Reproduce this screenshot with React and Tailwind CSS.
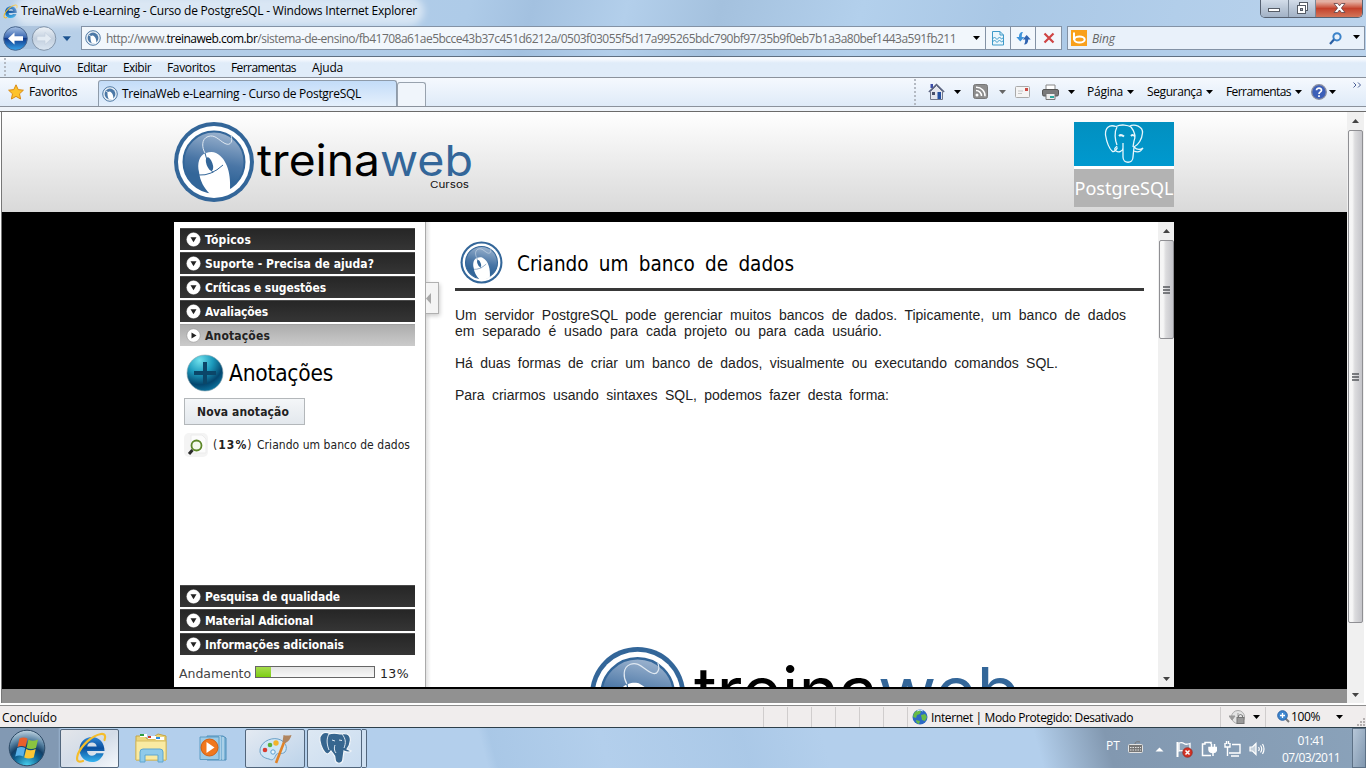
import { useLayoutEffect, useRef } from "react";

/* One line of text spread over a fixed width, by letter or by word spacing. */
function Fit({ w, by = "letter", className = "", children }) {
  const ref = useRef(null);
  useLayoutEffect(() => {
    const el = ref.current;
    el.style.letterSpacing = "0px";
    el.style.wordSpacing = "0px";
    const text = el.textContent;
    const rest = w - el.getBoundingClientRect().width;
    if (by === "word") el.style.wordSpacing = rest / (text.split(" ").length - 1) + "px";
    else el.style.letterSpacing = rest / text.length + "px";
  }, [w, by]);
  return (
    <span ref={ref} className={"inline-block shrink-0 whitespace-pre " + className}>
      {children}
    </span>
  );
}

const Down = ({ className = "" }) => (
  <svg className={"shrink-0 " + className} width="7" height="4" viewBox="0 0 7 4">
    <path d="M0 0h7L3.5 4z" fill="currentColor" />
  </svg>
);

const MouseArt = ({ id }) => (
  <g>
    <defs>
      <linearGradient id={id} x1="0.6" y1="0" x2="0.4" y2="1">
        <stop offset="0" stopColor="#9db4cf" />
        <stop offset="0.5" stopColor="#4a76a6" />
        <stop offset="0.75" stopColor="#336699" />
      </linearGradient>
    </defs>
    <circle cx="40" cy="40" r="40" fill="#336699" />
    <circle cx="40" cy="40" r="36" fill="#fff" />
    <circle cx="40" cy="40" r="30.500" fill={"url(#" + id + ")"} stroke="#336699" strokeWidth="2" />
    <path d="M32 31C25 33 23 42 25 50c1 9 5 16 11 22 7 1 14 0 20-4 1-14-2-31-14-37-3-1.500-7-1-10 0z" fill="#fff" />
    <path d="M25 53q12 1 24-10M31 31q2 12 8 20" fill="none" stroke="#336699" strokeWidth="1" />
    <ellipse cx="35.500" cy="42" rx="3" ry="7" transform="rotate(-20 35.500 42)" fill="#336699" />
    <path d="M31 31C28 26 27 17 34 14.500s11 4 17 7 8-3 6-8" fill="none" stroke="#dfe8f1" strokeWidth="1" />
  </g>
);

const MiniLogo = ({ className = "" }) => (
  <svg className={"shrink-0 " + className} width="16" height="16" viewBox="0 0 16 16">
    <circle cx="8" cy="8" r="7.300" fill="#e8eff6" stroke="#4f7aa5" />
    <circle cx="8" cy="8" r="5.400" fill="#4c78a6" />
    <path d="M6 6c-1 1-.5 5 1 7.500h4C12 10 10 6 7.500 5.600z" fill="#fff" />
    <path d="M4 5l4 3" stroke="#fff" strokeWidth=".8" />
  </svg>
);

const IeGlyph = ({ size, id, className = "" }) => (
  <svg className={"shrink-0 " + className} width={size} height={size} viewBox="0 0 32 32">
    <defs>
      <linearGradient id={id} x1="0" y1="0" x2="0" y2="1">
        <stop offset="0" stopColor="#2f86d6" />
        <stop offset="0.45" stopColor="#0b4f9e" />
        <stop offset="1" stopColor="#35b4f0" />
      </linearGradient>
    </defs>
    <path d="M29.500 19H12c.3 3 2.500 4.700 5 4.700 2 0 3.500-1 4.200-2.500h7.500C27 26.500 22.800 30 17 30 10 30 4.500 25 4.500 17.500S10 5 17 5s12.500 5.500 12.500 14zM12.200 14.500h9.500c-.3-2.500-2.200-4-4.700-4s-4.400 1.500-4.800 4z" fill={"url(#" + id + ")"} />
    <path d="M29.500 8C31 4 30 1.500 26 2 17 3.500 7 13 3 22c-2 6-1 9 5 7" fill="none" stroke="#f5bd2b" strokeWidth="2.200" strokeLinecap="round" />
  </svg>
);

function TitleBar() {
  return (
    <div className="flex h-[22px] items-center pl-[3px]">
      <IeGlyph size={15} id="ie-small" />
      <div className="ml-[3px] flex h-[16px] items-center rounded-full bg-white/50 shadow-[0_0_7px_7px_rgba(255,255,255,0.5)]">
        <Fit w={396} className="text-[12px] leading-[16px]">TreinaWeb e-Learning - Curso de PostgreSQL - Windows Internet Explorer</Fit>
      </div>
      <div className="mr-[3px] ml-auto flex h-[18px] self-start overflow-hidden rounded-b-[5px] border border-t-0 border-[#566171]">
        <div className="flex w-[28px] items-center justify-center border-r border-[#7a8797] bg-linear-to-b from-[#d3dde9] via-[#b9c6d6] to-[#a2b2c6]">
          <svg width="13" height="18"><rect x=".5" y="8.500" width="11" height="3" fill="#fff" stroke="#555c66" /></svg>
        </div>
        <div className="flex w-[27px] items-center justify-center border-r border-[#7a8797] bg-linear-to-b from-[#d3dde9] via-[#b9c6d6] to-[#a2b2c6]">
          <svg width="13" height="14" fill="#fff" stroke="#555c66"><rect x="3.500" y=".5" width="8" height="8" /><rect x="1.500" y="3.500" width="8" height="8" /><rect x="4.500" y="6.500" width="2" height="2" fill="#aab" /></svg>
        </div>
        <div className="flex w-[46px] items-center justify-center bg-linear-to-b from-[#e3b0a3] from-10% via-[#c4412b] via-50% to-[#d27458]">
          <svg width="13" height="12" viewBox="0 0 13 12" className="mb-[2px]"><path d="M1 1.500h3.500l2 2.300 2-2.300H12L8.400 6l3.600 4.500H8.500l-2-2.500-2 2.500H1L4.600 6z" fill="#fff" stroke="#5d4146" strokeWidth=".8" /></svg>
        </div>
      </div>
    </div>
  );
}

function AddressBar() {
  return (
    <div className="flex h-[34px] pt-[4px]">
      <svg width="76" height="28" viewBox="0 0 76 28" className="mt-[-2px] shrink-0">
        <defs>
          <linearGradient id="back" x1="0" y1="0" x2="0" y2="1">
            <stop offset="0" stopColor="#a9c3e4" /><stop offset=".45" stopColor="#3b68b3" /><stop offset=".5" stopColor="#12398a" /><stop offset="1" stopColor="#36a4ec" />
          </linearGradient>
          <linearGradient id="fwd" x1="0" y1="0" x2="0" y2="1">
            <stop offset="0" stopColor="#eef3f8" /><stop offset=".5" stopColor="#c3d0df" /><stop offset="1" stopColor="#dbe6f1" />
          </linearGradient>
        </defs>
        <path d="M14 2h32a12 12 0 0 1 0 23H14z" fill="#a5bed8" opacity=".7" />
        <circle cx="15.500" cy="14.500" r="11.800" fill="url(#back)" stroke="#49678f" />
        <path d="M8 14.500l6.500-6v3.800H23v4.500h-8.500v3.800z" fill="#fff" />
        <circle cx="44" cy="14.500" r="11.800" fill="url(#fwd)" stroke="#8395aa" />
        <path d="M51.500 14.500l-6.500-6v3.800h-8v4.500h8v3.800z" fill="#e3ebf3" stroke="#c3cfdd" strokeWidth=".6" />
        <path d="M62 12h9.500L67 17.500z" fill="#1c5391" stroke="#dbe8f5" strokeWidth=".5" />
      </svg>
      <div className="ml-[5px] flex h-[24px] w-[981px] border border-[#8392a5] bg-[#f2f7fc]">
        <div className="flex w-[903px] items-center pl-[3px]">
          <MiniLogo />
          <Fit w={850} className="mt-[2px] ml-[5px] text-[12px] text-[#6d6d6d]">http://www.<span className="text-black">treinaweb.com.br</span>/sistema-de-ensino/fb41708a61ae5bcce43b37c451d6212a/0503f03055f5d17a995265bdc790bf97/35b9f0eb7b1a3a80bef1443a591fb211</Fit>
          <Down className="ml-[17px]" />
        </div>
        <div className="flex w-[25px] items-center justify-center border-l border-[#8392a5]">
          <svg width="12" height="15" fill="none" stroke="#3f9ac9"><path d="M.5.500h7.500l3.500 3.500v10H.5z" fill="#eaf6fc" /><path d="M8 .5v3.500h3.500M.5 8l2-2 2.500 2.500L7.500 6l2 2 2-1.500M.5 11l2-2 2.500 2.500L7.500 9l2 2 2-1.500" /></svg>
        </div>
        <div className="flex w-[25px] items-center justify-center border-l border-[#8392a5]">
          <svg width="15" height="14"><path d="M7 1C4 1 3 3 3 6H.3L4.300 10.500l4-4.500H5.800c0-2 0-3 1.200-5z" fill="#3f94da" /><path d="M8 13.500c3 0 4.200-2 4.200-5h2.500L10.700 4 6.700 8.500h2.500c0 2 0 3.500-1.200 5z" fill="#2f63b0" /></svg>
        </div>
        <div className="flex flex-1 items-center justify-center border-l border-[#8392a5]">
          <svg width="12" height="12" stroke="#cf4444" strokeWidth="2.200"><path d="M1.500 1.500l9 9M10.500 1.500l-9 9" /></svg>
        </div>
      </div>
      <div className="ml-[5px] flex h-[24px] w-[298px] items-center border border-[#8392a5] bg-[#e9f1fa]">
        <div className="ml-[3px] flex h-[16px] w-[16px] items-center justify-center bg-[#f9a01b]">
          <svg width="14" height="14" fill="none" stroke="#fff" strokeWidth="2"><path d="M2 1.500V9" /><ellipse cx="7.500" cy="8.500" rx="5.200" ry="3" /></svg>
        </div>
        <Fit w={23} className="mt-[2px] ml-[5px] text-[12px] text-[#666] italic">Bing</Fit>
        <svg className="ml-auto" width="13" height="13" fill="none"><circle cx="8" cy="4.800" r="3.600" stroke="#3b83c9" strokeWidth="2" /><path d="M5 7.500L1 12" stroke="#2a5fa3" strokeWidth="2.200" /></svg>
        <Down className="mr-[4px] mb-[3px] ml-[11px]" />
      </div>
    </div>
  );
}

const Grip = ({ className }) => (
  <div className={"w-[2px] shrink-0 border-l-2 border-dotted border-[#b4bac3] " + className} />
);

function MenuBar() {
  const items = [["Arquivo", 42], ["Editar", 30], ["Exibir", 28], ["Favoritos", 48], ["Ferramentas", 65], ["Ajuda", 31]];
  return (
    <div className="flex h-[21px] items-center border-t border-[#5f6f81] bg-linear-to-b from-[#f7fafe] from-10% to-[#e0ecf9] to-30%">
      <Grip className="ml-[4px] h-[18px]" />
      <div className="mt-[2px] ml-[13px] flex gap-[16px]">
        {items.map(([label, w]) => <Fit key={label} w={w} className="text-[12px]">{label}</Fit>)}
      </div>
    </div>
  );
}

function TabBar() {
  return (
    <div className="flex h-[30px] items-end border-t border-b border-[#8b929c] bg-linear-to-b from-[#f5f9fe] to-[#dfebf8]">
      <div className="flex h-[26px] w-[98px] items-start pl-[8px]">
        <svg width="16" height="16" viewBox="0 0 16 16" className="mt-[4px]"><path d="M8 .8l2.200 4.800 5.200.6-3.900 3.600 1.100 5.200L8 12.400 3.400 15l1.100-5.200L.6 6.200l5.200-.6z" fill="#fdc32c" stroke="#d98a15" /></svg>
        <Fit w={48} className="ml-[5px] text-[12px] leading-[24px]">Favoritos</Fit>
      </div>
      <div className="flex h-[26px] w-[299px] items-center rounded-t-[3px] border border-b-0 border-[#8e9baa] bg-linear-to-b from-[#c3dcf8] to-[#e5f0fc] pl-[3px]">
        <MiniLogo />
        <Fit w={239} className="ml-[4px] text-[12px]">TreinaWeb e-Learning - Curso de PostgreSQL</Fit>
      </div>
      <div className="h-[24px] w-[29px] rounded-t-[3px] border border-b-0 border-[#98a2ae] bg-[#f0f5fb]" />
      <div className="ml-auto flex h-[28px] items-center pb-[1px] text-black">
        <Grip className="h-[26px]" />
        <svg className="ml-[12px]" width="17" height="17" viewBox="0 0 17 17"><path d="M2.500 1h2.500v4H2.500z" fill="#3b4ca8" /><path d="M2.500 8.500l6-6 6 6v8h-12z" fill="#e4e6ee" stroke="#70778a" /><path d="M.8 9l7.700-7.500L16.200 9" fill="none" stroke="#5b6480" strokeWidth="1.300" /><path d="M4 9h3v3H4z" fill="#49506b" /><path d="M9.500 9h3.500v7H9.500z" fill="#244fa0" /></svg>
        <Down className="ml-[9px]" />
        <svg className="ml-[12px]" width="15" height="15"><rect x=".5" y=".5" width="14" height="14" rx="2" fill="#8d8d8d" stroke="#777" /><circle cx="4" cy="11" r="1.500" fill="#fff" /><path d="M3 6.500a5.500 5.500 0 0 1 5.500 5.500M3 3.200a8.500 8.500 0 0 1 9 9" fill="none" stroke="#fff" strokeWidth="1.500" /></svg>
        <Down className="ml-[11px] text-[#666]" />
        <svg className="ml-[9px]" width="15" height="12"><rect x=".5" y=".5" width="14" height="11" rx="1" fill="#f5f5f5" stroke="#aaa" /><path d="M3 5h5M3 7.500h4" stroke="#c5c5c5" /><path d="M10 2h3v3h-3z" fill="#cc4b45" /></svg>
        <svg className="ml-[12px]" width="17" height="16"><path d="M4 1h9v5H4z" fill="#fff" stroke="#888" /><rect x=".5" y="5.500" width="16" height="6.500" rx="1.500" fill="#7a7a7a" stroke="#555" /><path d="M4 9.500h9v6H4z" fill="#eee" stroke="#777" /><path d="M8 12h4v2H8z" fill="#2da9a0" /></svg>
        <Down className="ml-[9px]" />
        <Fit w={36} className="ml-[12px] text-[12px]">Página</Fit>
        <Down className="ml-[4px]" />
        <Fit w={55} className="ml-[13px] text-[12px]">Segurança</Fit>
        <Down className="ml-[4px]" />
        <Fit w={65} className="ml-[13px] text-[12px]">Ferramentas</Fit>
        <Down className="ml-[4px]" />
        <svg className="ml-[9px]" width="16" height="16"><circle cx="8" cy="8" r="7.300" fill="#3c5fb8" stroke="#8b8fa0" strokeWidth="1.300" /><path d="M5.500 6.300C5.500 3.500 10.700 3.500 10.500 6.300 10.400 8 8 7.800 8 10M8 11.300v1.700" fill="none" stroke="#fff" strokeWidth="1.700" /></svg>
        <Down className="ml-[2px]" />
        <svg className="mr-[4px] mb-[14px] ml-[17px]" width="9" height="6" fill="none" stroke="#4a5f94"><path d="M.5.500L3 3 .5 5.500M5 .5L7.500 3 5 5.500" /></svg>
      </div>
    </div>
  );
}

function ScrollBar({ height, thumb, className = "" }) {
  const heights = { tall: "h-[493px]", short: "h-[99px]" };
  return (
    <div className={"flex shrink-0 flex-col items-center bg-[#f0f0f0] " + height + " " + className}>
      <div className="flex h-[18px] w-full shrink-0 items-center justify-center">
        <svg width="7" height="4"><path d="M0 4h7L3.500 0z" fill="#444" /></svg>
      </div>
      <div className={"flex w-[15px] shrink-0 items-center justify-center rounded-[2px] border border-[#8f8f93] bg-linear-to-r from-[#f6f6f6] from-25% via-[#dcdcde] via-45% to-[#c4c4c9] " + heights[thumb]}>
        <svg width="7" height="8" stroke="#55585c" strokeWidth="1.400"><path d="M0 1h7M0 4h7M0 7h7" /></svg>
      </div>
      <div className="mt-auto flex h-[17px] items-center"><Down className="text-[#444]" /></div>
    </div>
  );
}

function Wordmark({ size, dark, blue, y }) {
  return (
    <g fontFamily="Inter, sans-serif" fontSize={size}>
      <text x={dark[0]} y={y} textLength={dark[1]} lengthAdjust="spacingAndGlyphs" fill="#000">treina</text>
      <text x={blue[0]} y={y} textLength={blue[1]} lengthAdjust="spacingAndGlyphs" fill="#336699">web</text>
    </g>
  );
}

function SiteHeader() {
  return (
    <div className="flex h-[100px] shrink-0 items-start justify-between bg-linear-to-b from-white to-[#d9d9d9] pt-[10px] pr-[173px] pl-[172px]">
      <svg width="300" height="82" viewBox="0 0 300 82">
        <MouseArt id="mouse-a" />
        <Wordmark size={43} y={54} dark={[83, 123]} blue={[206, 93]} />
        <text x="256" y="66" textLength="39" lengthAdjust="spacingAndGlyphs" fontFamily="Inter, sans-serif" fontSize="9.500" fill="#111">Cursos</text>
      </svg>
      <div className="flex w-[100px] flex-col">
        <div className="flex h-[44px] justify-center bg-linear-to-b from-[#0290c0] to-[#0099cf]">
          <svg width="40" height="44" viewBox="0 0 40 44" fill="none" stroke="#e8f7fc" strokeWidth="1.300">
            <path d="M12 4.500C5 2 1 6 1.500 13c1 6 3 13 7 16.500 2 .5 4-2 5-4M13 5c-3 5-2 13 0 18M12 4.500C17 2 24 3 27 5M25 4.500C31 1 39 5 38.500 11c-.5 6-4 12-8.500 14M27 5c4 5 5 9 3 14l-1 6" />
            <path d="M13 24c-1 2-4 2-1 5 3 2 7 0 7-3M19 21v14c0 7 10 7 10 0l1-10c3 3 6 3 9 1-3 5-7 4-9 3" />
            <path d="M15 14q2-2 5 .5M27 14q2-2 4 .5" strokeWidth="2" />
          </svg>
        </div>
        <div className="h-[3px] bg-white" />
        <div className="flex h-[38px] items-center justify-center bg-[#b3b3b3]">
          <Fit w={99} className="font-['Noto_Sans',sans-serif] text-[18px] leading-[36px] text-white">PostgreSQL</Fit>
        </div>
      </div>
    </div>
  );
}

function SideItem({ label, w, open, className = "" }) {
  return (
    <div className={"flex h-[22px] w-[235px] items-center border-t pl-[6px] " + (open ? "border-[#a2a2a2] bg-linear-to-b from-[#adadad] to-[#cbcbcb] text-[#222] " : "border-[#4a4a4a] bg-linear-to-b from-[#262626] to-[#353535] text-white ") + className}>
      <svg width="15" height="15" viewBox="0 0 15 15" className="shrink-0">
        <circle cx="7.500" cy="7.500" r="6.700" fill="#fff" stroke={open ? "#888" : "#fff"} strokeWidth=".5" />
        {open ? <path d="M5.500 4.500v6l5-3z" fill="#222" /> : <path d="M4.500 5.200h6l-3 5z" fill="#222" />}
      </svg>
      <Fit w={w} className="ml-[4px] font-['DejaVu_Sans_Condensed','DejaVu_Sans',sans-serif] text-[12px] leading-[20px] font-bold">{label}</Fit>
    </div>
  );
}

function Sidebar() {
  return (
    <div className="flex w-[252px] shrink-0 flex-col border-r border-[#aaa] bg-white pt-[6px] font-['DejaVu_Sans_Condensed','DejaVu_Sans',sans-serif]">
      <div className="flex flex-col gap-[2px] pl-[6px]">
        <SideItem label="Tópicos" w={46} />
        <SideItem label="Suporte - Precisa de ajuda?" w={169} />
        <SideItem label="Críticas e sugestões" w={121} />
        <SideItem label="Avaliações" w={63} />
        <SideItem label="Anotações" w={65} open />
      </div>
      <div className="mt-[8px] flex h-[38px] items-center pl-[12px]">
        <svg width="38" height="38" viewBox="0 0 38 38">
          <defs>
            <radialGradient id="plus" cx=".35" cy=".15" r=".9">
              <stop offset="0" stopColor="#6fe0ec" /><stop offset=".4" stopColor="#1d9bbd" /><stop offset=".75" stopColor="#04466e" /><stop offset="1" stopColor="#0c77a3" />
            </radialGradient>
          </defs>
          <circle cx="19" cy="19" r="18" fill="url(#plus)" stroke="#8fa6b0" strokeWidth=".6" />
          <path d="M17 8h4v9h9v4h-9v9h-4v-9H8v-4h9z" fill="#0b4668" />
        </svg>
        <Fit w={104} className="ml-[5px] text-[22.500px]">Anotações</Fit>
      </div>
      <div className="mt-[6px] ml-[10px] flex h-[27px] w-[121px] items-center border border-[#b3b7ba] bg-linear-to-b from-[#f4f6f8] to-[#e3e8ed] pl-[12px]">
        <Fit w={92} className="text-[12px] font-bold text-[#222]">Nova anotação</Fit>
      </div>
      <div className="mt-[8px] flex h-[24px] items-center pl-[10px]">
        <svg width="24" height="24"><rect x="0" y="0" width="24" height="24" rx="5" fill="#f4f4f4" /><path d="M7 2h11l4 4v14H7z" fill="#fcfcfc" stroke="#ececec" /><circle cx="12.500" cy="12.500" r="5" fill="#f4faec" stroke="#5c8727" strokeWidth="1.800" /><path d="M8.500 17L5 21" stroke="#2a2a2a" strokeWidth="3" /></svg>
        <div className="ml-[5px] flex text-[12px] text-[#222]">
          <Fit w={44}>(<b>13%</b>) </Fit>
          <Fit w={153}>Criando um banco de dados</Fit>
        </div>
      </div>
      <div className="mt-auto flex flex-col gap-[2px] pl-[6px]">
        <SideItem label="Pesquisa de qualidade" w={135} />
        <SideItem label="Material Adicional" w={108} />
        <SideItem label="Informações adicionais" w={139} />
      </div>
      <div className="mt-[7px] mb-[3px] flex h-[22px] items-center pt-[1px] pl-[5px] font-['DejaVu_Sans',sans-serif] text-[12.500px] text-[#444]">
        <Fit w={72}>Andamento</Fit>
        <div className="mr-[5px] mb-[3px] ml-[4px] h-[12px] w-[120px] border border-[#666] bg-linear-to-b from-[#e4e4e4] to-[#f8f8f8]">
          <div className="h-full w-[15px] bg-linear-to-b from-[#a6dc4a] to-[#7dce0c]" />
        </div>
        <Fit w={29} className="text-[#222]">13%</Fit>
      </div>
    </div>
  );
}

function Lesson() {
  return (
    <div className="relative flex w-[732px] shrink-0 flex-col overflow-hidden bg-white bg-linear-to-r from-[#e2e2e2] to-white to-[5px] pt-[18px] pl-[29px]">
      <div className="absolute top-[60px] left-[-1px] flex h-[32px] w-[14px] items-center border border-l-0 border-[#b0b0b0] bg-[#f4f4f4] shadow-[1px_2px_4px_rgba(0,0,0,0.2)]">
        <svg width="7" height="11"><path d="M6 0v11L1 5.500z" fill="#a8a8a8" /></svg>
      </div>
      <div className="flex h-[51px] w-[689px] items-center border-b-[3px] border-[#383838] pl-[5px]">
        <svg width="43" height="43" viewBox="-1 -1 82 82" className="mb-[3px]"><MouseArt id="mouse-b" /></svg>
        <Fit w={277} by="word" className="ml-[14px] font-['DejaVu_Sans_Condensed','DejaVu_Sans',sans-serif] text-[20.500px] leading-[30px] tracking-[-0.2px]">Criando um banco de dados</Fit>
      </div>
      <div className="mt-[16px] flex flex-col items-start font-['Liberation_Sans',sans-serif] text-[14px] leading-[16px] text-[#222]">
        <Fit w={671} by="word">Um servidor PostgreSQL pode gerenciar muitos bancos de dados. Tipicamente, um banco de dados</Fit>
        <Fit w={427} by="word">em separado é usado para cada projeto ou para cada usuário.</Fit>
        <Fit w={603} by="word" className="mt-[16px]">Há duas formas de criar um banco de dados, visualmente ou executando comandos SQL.</Fit>
        <Fit w={434} by="word" className="mt-[16px]">Para criarmos usando sintaxes SQL, podemos fazer desta forma:</Fit>
      </div>
      <svg className="mt-auto ml-[135px] shrink-0" width="440" height="40" viewBox="0 0 440 40">
        <g transform="scale(1.19)"><MouseArt id="mouse-c" /></g>
        <Wordmark size={68} y={69} dark={[104, 184]} blue={[288, 142]} />
      </svg>
    </div>
  );
}

function Page() {
  return (
    <div className="flex h-[592px] border-t border-[#6b6b6b]">
      <div className="w-[2px] shrink-0 border-l border-white bg-[#777]" />
      <div className="flex w-[1345px] shrink-0 flex-col bg-black">
        <SiteHeader />
        <div className="flex h-[477px] pt-[10px] pb-[2px] pl-[172px]">
          <Sidebar />
          <Lesson />
          <ScrollBar height="h-[465px]" thumb="short" className="w-[16px]" />
        </div>
        <div className="h-[14px] bg-[#919191]" />
      </div>
      <ScrollBar height="h-[591px]" thumb="tall" className="w-[17px]" />
      <div className="flex-1 bg-white" />
    </div>
  );
}

function StatusBar() {
  const sep = "h-[20px] w-px shrink-0 bg-[#d0cdcd]";
  return (
    <div className="flex h-[25px] flex-col border-t border-b border-t-white border-b-[#2d3f4a] bg-white text-[12px]">
      <div className="mt-[1px] flex h-[22px] items-center border-t border-[#8e8e8e] bg-[#f0eded]">
        <Fit w={55} className="mt-[2px] ml-[2px]">Concluído</Fit>
        <div className="ml-[706px] flex gap-[23px]">
          {[0, 1, 2, 3, 4, 5, 6].map((n) => <div key={n} className={sep} />)}
        </div>
        <svg className="ml-[4px]" width="16" height="16"><circle cx="8" cy="8" r="7.500" fill="#2c69c4" /><path d="M3 3q3-3 6-1l-1 3-3 1-1 3-3-1q0-3 2-5zM9 6l4-1 2 3-2 4-3-1zM4 11l4 1-1 3q-3-1-3-4z" fill="#67bb45" /><path d="M5 2q3-2 6 0" stroke="#c9e6f8" fill="none" /></svg>
        <Fit w={202} className="mt-[2px] ml-[3px]">Internet | Modo Protegido: Desativado</Fit>
        <div className={sep + " ml-[87px]"} />
        <svg className="ml-[8px]" width="17" height="16"><circle cx="9" cy="8" r="6.500" fill="#e4e4e4" stroke="#aaa" /><path d="M0 7h6L3 11zM9 4v4" fill="#999" stroke="#999" /><rect x="8" y="8.500" width="7" height="6" fill="#999" stroke="#777" /><path d="M9.500 8V6.500q2-2 4 0V8" fill="none" stroke="#777" /></svg>
        <Down className="ml-[7px]" />
        <div className={sep + " ml-[5px]"} />
        <svg className="ml-[11px]" width="13" height="13"><path d="M8 8l4 4" stroke="#777" strokeWidth="2" /><circle cx="5.500" cy="5.500" r="4.800" fill="#3d86cf" stroke="#2b62a5" /><path d="M3 5.500h5M5.500 3v5" stroke="#fff" strokeWidth="1.300" /></svg>
        <Fit w={29} className="mt-[1px] ml-[1px]">100%</Fit>
        <Down className="ml-[16px]" />
        <svg className="mt-auto ml-[14px]" width="9" height="9" fill="#b5b0b0"><path d="M6 0h2v2H6zM3 3h2v2H3zM6 3h2v2H6zM0 6h2v2H0zM3 6h2v2H3zM6 6h2v2H6z" /></svg>
      </div>
    </div>
  );
}

function Taskbar() {
  const active = "flex h-[39px] items-center justify-center rounded-[2px] border border-[#52667c] ";
  return (
    <div className="flex h-[40px] items-center bg-linear-to-r from-[#8299b3] from-[58px] via-[#b3cfec] via-[62px] to-[#b3cfec]">
      <svg className="ml-[8px] shrink-0" width="38" height="38" viewBox="0 0 38 38">
        <defs>
          <radialGradient id="orb" cx=".5" cy="1" r="1"><stop offset="0" stopColor="#49d3f2" /><stop offset=".4" stopColor="#0c5c8c" /><stop offset=".55" stopColor="#123f66" /><stop offset=".75" stopColor="#5c86a6" /><stop offset="1" stopColor="#c3d6e2" /></radialGradient>
        </defs>
        <circle cx="19" cy="19" r="17.800" fill="url(#orb)" stroke="#2d4a66" />
        <path d="M11.500 9.500q4-2 8 0l-2 8.500q-4-2-8 0z" fill="#e8602c" />
        <path d="M20.500 10.500q4 2.500 9.500 0l-2 8.500q-5 2-9.500 0z" fill="#8bc43f" />
        <path d="M9.200 19q4-2 8 0l-2 8.500q-4-2-8 0z" fill="#58b1e8" />
        <path d="M18.200 20q4 2.500 9.500 0l-2 8.500q-5 2-9.500 0z" fill="#fbc735" />
      </svg>
      <div className={active + "ml-[14px] w-[59px] bg-linear-to-br from-[#e4e6ea] via-[#d3dcE8] to-[#f4f8fc]"}><IeGlyph size={32} id="ie-large" className="ml-[3px]" /></div>
      <svg className="ml-[16px] shrink-0" width="33" height="32" viewBox="0 0 33 32">
        <path d="M1 4h9l2 3h8V4l3-2 8 2v24H1z" fill="#ecd67c" stroke="#c4a545" />
        <path d="M5 2h7v3H5zM13 4h8v3h-8zM21 5h8v3h-8z" fill="#fff" /><path d="M5 2h4v2H5z" fill="#2f9e41" /><path d="M13 4h3v2h-3z" fill="#cf3e2c" /><path d="M21 5h4v2h-4z" fill="#2f8fdf" />
        <path d="M1 9h30v19H1z" fill="#f9eaa2" stroke="#d8bd63" />
        <path d="M5 30V20q0-3 3-3h17q3 0 3 3v10h-5v-7H10v7z" fill="#8fcaea" stroke="#5ea6cf" />
      </svg>
      <svg className="ml-[31px] shrink-0" width="30" height="30" viewBox="0 0 30 30">
        <path d="M8 3h16l3 2v22H8z" fill="#7fb5d8" stroke="#4d8db8" /><path d="M21 3v24M24 4v23" stroke="#d7ecf8" />
        <path d="M1 4h19v22.500H1z" fill="#9dcbe6" stroke="#5c9cc4" />
        <circle cx="10.500" cy="14.500" r="8.500" fill="#f0781e" stroke="#d35f10" /><path d="M7.500 9v11l8-5.500z" fill="#fff" />
      </svg>
      <div className={active + "ml-[16px] w-[60px] bg-linear-to-br from-[#e4eaf2] to-[#bcd3ea]"}>
        <svg width="34" height="34" viewBox="0 0 34 34">
          <path d="M2 21C1 12 12 6 20 8c8 2 10 9 7 13-3 3-8 0-9 3-2 4-3 6-7 4C6 27 3 25 2 21z" fill="#cfe6f6" stroke="#6ba0c6" />
          <circle cx="7" cy="19" r="2.300" fill="#d93c31" /><circle cx="12" cy="14" r="2.300" fill="#5bb040" /><circle cx="18" cy="12" r="2.700" fill="#f2b32a" /><circle cx="15" cy="21" r="2.200" fill="#e9f5fc" stroke="#5b9fd0" />
          <path d="M26.500 10L18 32" stroke="#e08227" strokeWidth="2.600" /><path d="M24.500 11l1-7q3 1 8 0-1 5-6 8z" fill="#b08560" />
        </svg>
      </div>
      <div className={active + "ml-[2px] w-[55px] bg-linear-to-br from-[#dde8f3] to-[#c9dcf0]"}>
        <svg width="34" height="34" viewBox="0 0 34 34">
          <path d="M11 2C5 0 1 4 2 10c1 6 4 12 7 13 2 0 3-2 4-3 2 3 4 4 4 7 0 7 8 7 8 0l1-7c4 2 6 1 7 0l-4-2c4-5 5-13 0-15-3-1-6 0-7 0-4-1-8-1-11 0z" fill="#37668f" stroke="#f2f6fa" strokeWidth="1.200" />
          <path d="M11 3c-3 5-2 11 0 16M24 3c4 5 4 9 2 14M17 14c-1 2-1 6 1 8M14 9l3 1M21 9l3 .5" fill="none" stroke="#dfe9f2" strokeWidth="1" />
        </svg>
      </div>
      <div className="h-[39px] w-[5px] rounded-r-[2px] border border-l-0 border-[#52667c] bg-[#cfe0f1]" />
      <div className="flex h-full flex-1 items-center justify-end bg-[linear-gradient(75deg,transparent_12%,rgba(150,185,220,0.35)_13%,transparent_24%,rgba(150,185,220,0.3)_38%,transparent_46%,transparent_67%,#8298b0_74%,#8aa2ba_100%)]">
        <Fit w={14} className="mb-[4px] text-[12px] text-white">PT</Fit>
        <svg className="mb-[4px] ml-[8px]" width="16" height="13" fill="none" stroke="#e3e3e3"><rect x=".5" y="4.500" width="14" height="8" rx="1" fill="#777" /><path d="M2 7.500h11M2 10h11" strokeDasharray="1.500 1" /><path d="M7 4q0-3 5-2" stroke="#777" /></svg>
        <svg className="mt-[2px] ml-[11px]" width="9" height="5"><path d="M.5 4.500h8L4.500.500z" fill="#fff" /></svg>
        <svg className="mt-[2px] ml-[12px]" width="17" height="17"><path d="M1.500 1v15" stroke="#fff" strokeWidth="2" /><path d="M3 2q3-1 5 .5t6 0v8q-3 1.500-5.500 0T3 10z" fill="#8fa4b9" stroke="#fff" strokeWidth="1.300" /><circle cx="11.500" cy="11.500" r="4.800" fill="#d23326" stroke="#8f1d14" strokeWidth=".6" /><path d="M9.500 9.500l4 4m0-4l-4 4" stroke="#fff" strokeWidth="1.500" /></svg>
        <svg className="mt-[1px] ml-[8px]" width="16" height="16" fill="none" stroke="#fff" strokeWidth="1.500"><path d="M10 3V1.500H4V3H1.500v11.500H10M10.500 3v3.500M13.500 3v3.500M12 11v4" /><path d="M8 6.500h7.500v2q0 3-3.700 3T8 8.500z" fill="#fff" /></svg>
        <svg className="mt-[1px] ml-[7px]" width="17" height="16" fill="none" stroke="#fff" strokeWidth="1.400"><path d="M8 3.500h8v8.500H5M7 15h8M1 2v4h5V2M2.500 0v3M4.500 0v3M3.500 6v9" /></svg>
        <svg className="mt-[1px] ml-[8px]" width="16" height="16" fill="none" stroke="#fff" strokeWidth="1.200"><path d="M1 6h2.500L7 2.500v11L3.500 10H1z" fill="#c5d1dc" /><path d="M9.500 6q1.500 2 0 4M11.500 4.500q2.500 3.500 0 7M13.500 3q3 5 0 10" /></svg>
        <div className="mt-[1px] ml-[16px] flex w-[60px] flex-col items-center text-[12px] leading-[17px] text-white">
          <Fit w={27}>01:41</Fit>
          <Fit w={58}>07/03/2011</Fit>
        </div>
        <div className="ml-[11px] h-full w-[14px] border border-[#5d7186] bg-linear-to-br from-[#b7c7d8] to-[#8097af]" />
      </div>
    </div>
  );
}

export default function App() {
  return (
    <div className="flex h-[768px] w-[1366px] flex-col overflow-hidden bg-[linear-gradient(105deg,#b9d0e8_0%,#aecbe8_30%,#a3c1e0_34%,#b3cfeb_40%,#a4c1de_46%,#b3d0ec_55%,#a9c7e5_64%,#b2ceea_75%,#c3d8ee_100%)] font-['Open_Sans',sans-serif] leading-[18px] text-black">
      <TitleBar />
      <AddressBar />
      <MenuBar />
      <TabBar />
      <div className="h-[4px] shrink-0 bg-[#eef3f9]" />
      <Page />
      <StatusBar />
      <Taskbar />
    </div>
  );
}
